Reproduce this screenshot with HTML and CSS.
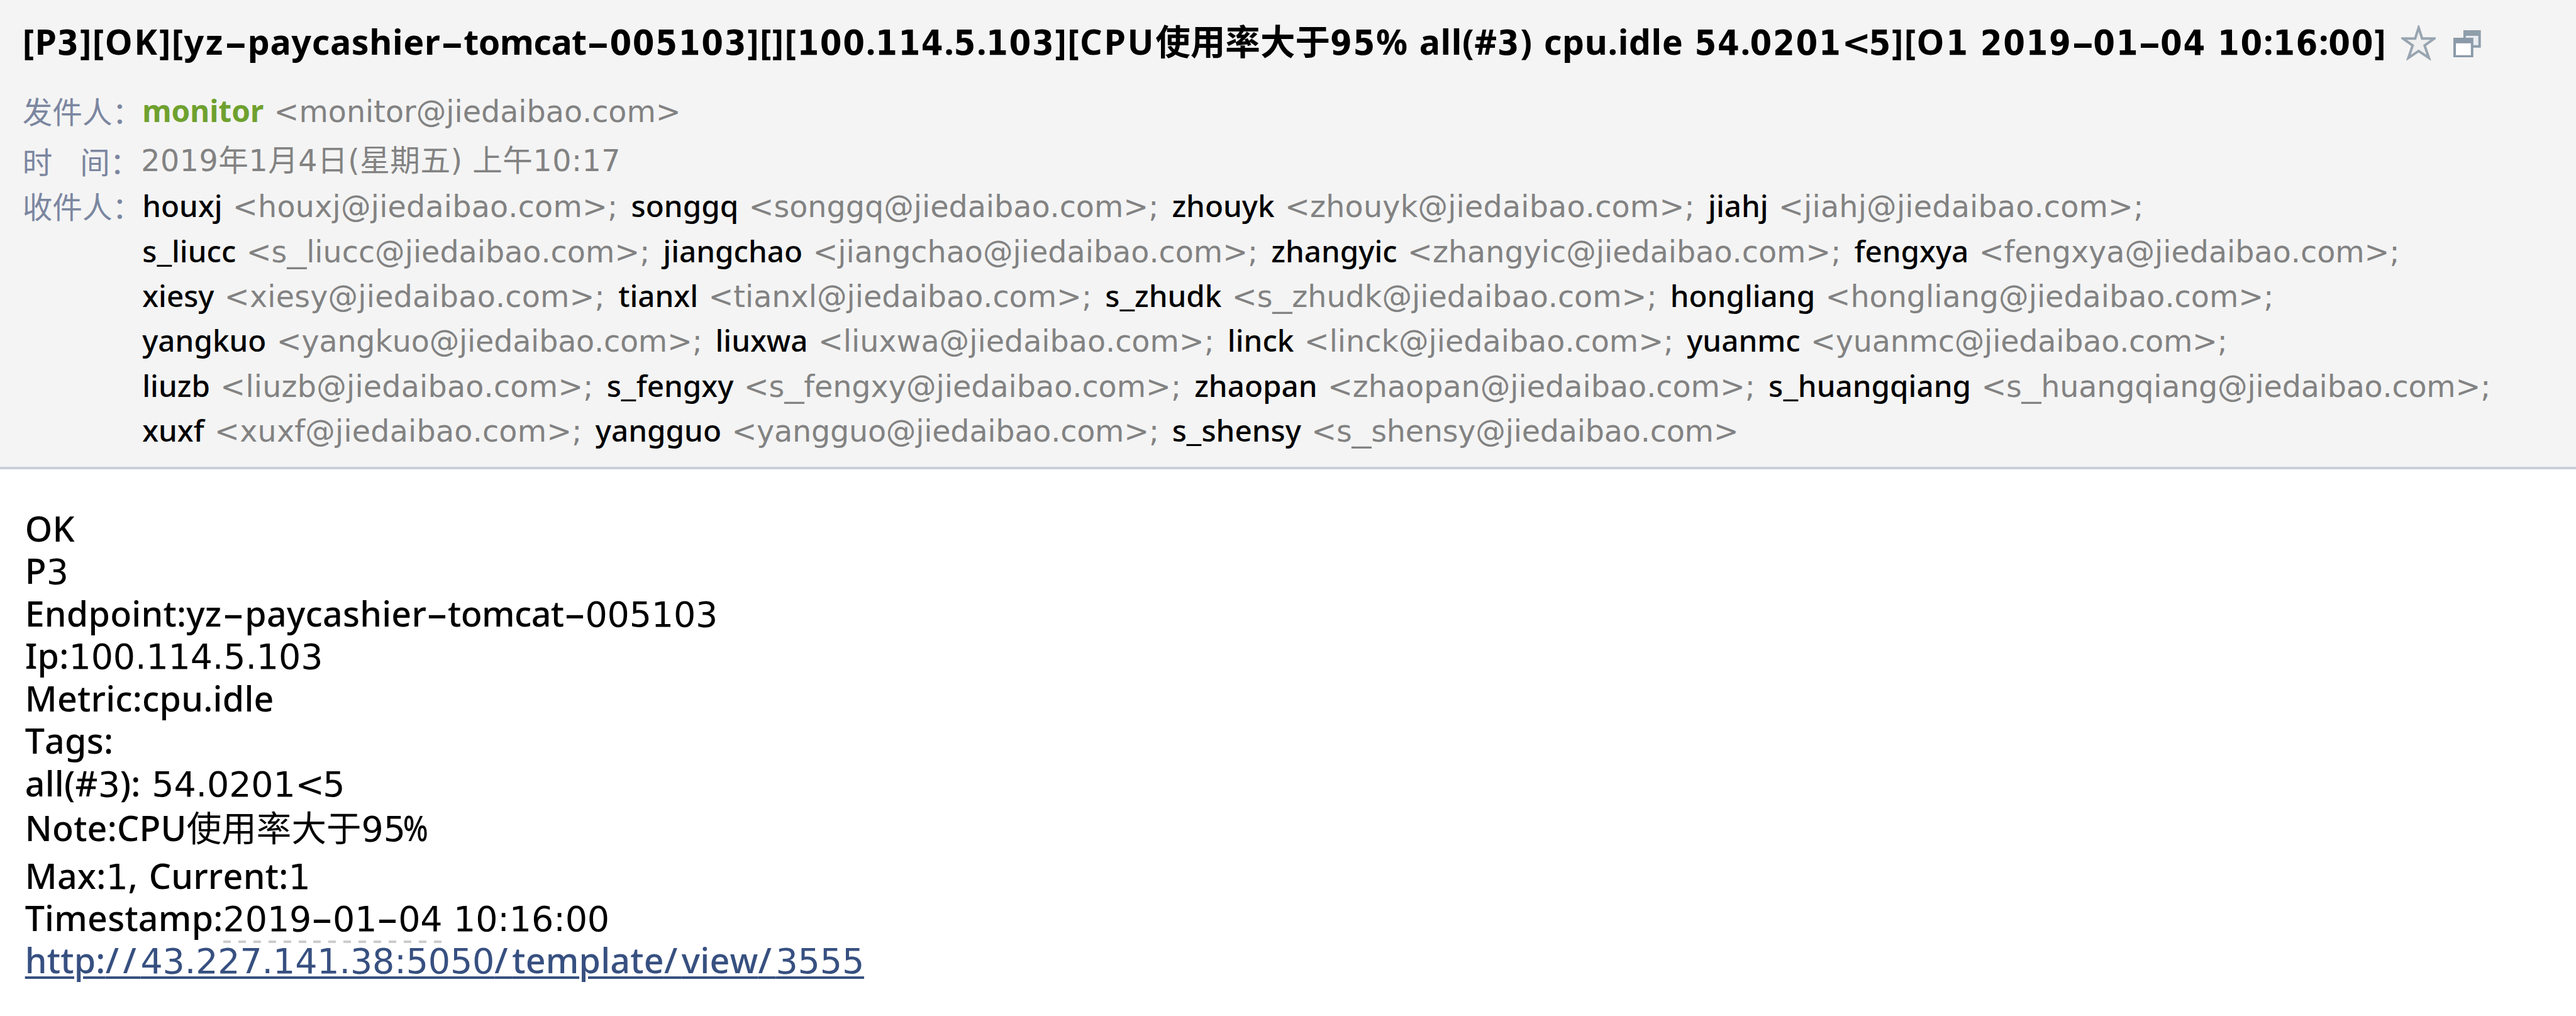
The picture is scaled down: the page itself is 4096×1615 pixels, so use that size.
FILE: index.html
```html
<!DOCTYPE html>
<html lang="zh-CN">
<head>
<meta charset="utf-8">
<title>monitor</title>
<link rel="stylesheet" href="styles.css">
</head>
<body>
<header class="mail-head">
  <div class="subject">
    <h1><i class="b">[</i>P<i class="n">3</i><i class="b">][</i><i class="wide">OK</i><i class="b">][</i><i class="wide">yz</i><i class="h lg">-</i>paycashier<i class="h lg">-</i><i class="tight">tomcat</i><i class="h lg">-</i><i class="n">005103</i><i class="b">][][</i><i class="n">100<i class="dot">.</i>114<i class="dot">.</i>5<i class="dot">.</i>103</i><i class="b">][</i><i class="wide">CPU</i><i class="cn">使用率大于</i><i class="n">95</i>% all(#<i class="n">3</i>) cpu.idle <i class="n">54<i class="dot">.</i>0201</i><i class="lt">&lt;</i><i class="n">5</i><i class="b">][</i><i class="wide">O</i><i class="n">1</i> <i class="n">2019</i><i class="h">-</i><i class="n">01</i><i class="h">-</i><i class="n">04</i> <i class="n">10<i class="dot">:</i>16<i class="dot">:</i>00</i><i class="b">]</i></h1>
    <svg class="star" viewBox="0 0 56 56"><path d="M28 4 L33.6 21.500H53L37.500 32.500L44.500 52.500L28 41.500L11.500 52.500L18.500 32.500L3 21.500H22.400Z"/></svg>
    <svg class="win" viewBox="0 0 44 44"><path fill="#8f9eab" d="M16 0h28v28H16z"/><path fill="#e9edf2" d="M20 9h20v15H20z"/><path fill="#8b9aa8" d="M0 12h32v32H0z"/><path fill="#fff" d="M4 21h24v19H4z"/></svg>
  </div>
  <dl class="meta">
    <dt>发件人：</dt>
    <dd class="from"><b>monitor</b> <span>&lt;monitor@jiedaibao.com&gt;</span></dd>
    <dt>时&nbsp;&nbsp;&nbsp;间：</dt>
    <dd class="time">2019年1月4日(星期五) 上午10:17</dd>
    <dt>收件人：</dt>
    <dd class="to">
      <p><b class="x">houxj</b> <span>&lt;houxj@jiedaibao.com&gt;; </span><b>songgq</b> <span>&lt;songgq@jiedaibao.com&gt;; </span><b class="x">zhouyk</b> <span>&lt;zhouyk@jiedaibao.com&gt;; </span><b class="x">jiahj</b> <span>&lt;jiahj@jiedaibao.com&gt;;</span></p>
      <p><b>s<u>_</u>liucc</b> <span>&lt;s<u>_</u>liucc@jiedaibao.com&gt;; </span><b>jiangchao</b> <span>&lt;jiangchao@jiedaibao.com&gt;; </span><b>zhangyic</b> <span>&lt;zhangyic@jiedaibao.com&gt;; </span><b>fengxya</b> <span>&lt;fengxya@jiedaibao.com&gt;;</span></p>
      <p><b class="x">xiesy</b> <span>&lt;xiesy@jiedaibao.com&gt;; </span><b>tianxl</b> <span>&lt;tianxl@jiedaibao.com&gt;; </span><b>s<u>_</u>zhudk</b> <span>&lt;s<u>_</u>zhudk@jiedaibao.com&gt;; </span><b>hongliang</b> <span>&lt;hongliang@jiedaibao.com&gt;;</span></p>
      <p><b class="t">yangkuo</b> <span>&lt;yangkuo@jiedaibao.com&gt;; </span><b>liuxwa</b> <span>&lt;liuxwa@jiedaibao.com&gt;; </span><b>linck</b> <span>&lt;linck@jiedaibao.com&gt;; </span><b class="t">yuanmc</b> <span>&lt;yuanmc@jiedaibao.com&gt;;</span></p>
      <p><b class="x">liuzb</b> <span>&lt;liuzb@jiedaibao.com&gt;; </span><b>s<u>_</u>fengxy</b> <span>&lt;s<u>_</u>fengxy@jiedaibao.com&gt;; </span><b>zhaopan</b> <span>&lt;zhaopan@jiedaibao.com&gt;; </span><b class="t">s<u>_</u>huangqiang</b> <span>&lt;s<u>_</u>huangqiang@jiedaibao.com&gt;;</span></p>
      <p><b class="x">xuxf</b> <span>&lt;xuxf@jiedaibao.com&gt;; </span><b class="t">yangguo</b> <span>&lt;yangguo@jiedaibao.com&gt;; </span><b class="t">s<u>_</u>shensy</b> <span>&lt;s<u>_</u>shensy@jiedaibao.com&gt;</span></p>
    </dd>
  </dl>
</header>
<main class="mail-body">
  <p>OK</p>
  <p>P<i class="n">3</i></p>
  <p>Endpoint:yz<i class="h lg">-</i>paycashier<i class="h">-</i><i class="tight">tomcat</i><i class="h">-</i><i class="n">005103</i></p>
  <p>Ip:<i class="n">100.114.5.103</i></p>
  <p>Metric:cpu.idle</p>
  <p>Tags:</p>
  <p>all(#<i class="n">3</i>): <i class="n">54.0201</i><i class="lt">&lt;</i><i class="n">5</i></p>
  <p class="note">Note:CPU<i class="cn">使用率大于</i><i class="n">95</i><i class="pc">%</i></p>
  <p>Max:<i class="n">1</i>, Current:<i class="n">1</i></p>
  <p>Timestamp:<span class="date"><i class="n">2019</i><i class="h">-</i><i class="n">01</i><i class="h">-</i><i class="n">04</i></span> <i class="n">10:16:00</i></p>
  <p><a href="#">http:<i class="sl">//</i><i class="n">43.227.141.38:5050</i><i class="sl">/</i>template<i class="sl">/</i>view<i class="sl">/</i><i class="n">3555</i></a></p>
</main>
</body>
</html>
```
FILE: styles.css
```css
* { box-sizing: border-box; }

body {
  margin: 0;
  width: 4096px;
  height: 1615px;
  overflow: hidden;
  background: #fff;
  color: #000;
  font-family: "Noto Sans", "Noto Sans CJK SC", sans-serif;
  font-weight: 500;
  font-kerning: none;
  white-space: nowrap;
}

i { font-style: normal; }
u { text-decoration: none; }
h1, p, dl, dd { margin: 0; }

.mail-head {
  height: 746.2px;
  padding: 25.7px 0 0 35.7px;
  background: #f4f4f4;
  border-bottom: 4px solid #c9cfd9;
}

.subject {
  display: flex;
  align-items: flex-start;
  height: 80px;
}

h1 {
  font-size: 55.56px;
  line-height: 80px;
  font-weight: 700;
  letter-spacing: 0.6px;
  word-spacing: 3px;
  width: 3782px;
}

.n, .lt {
  font-family: "DejaVu Sans", sans-serif;
  font-weight: 400;
  line-height: 0;
  letter-spacing: -0.2px;
}

.lt { letter-spacing: -3px; }

h1 .n {
  font-family: "DejaVu Sans Condensed", "DejaVu Sans", sans-serif;
  font-weight: 700;
  letter-spacing: 1.7px;
}

h1 .dot {
  font-family: "Noto Sans", sans-serif;
  letter-spacing: -0.5px;
}

h1 .lt { font-weight: 700; letter-spacing: -3.6px; }

.b { letter-spacing: 1.4px; }
.wide { letter-spacing: 2.7px; }
.tight { letter-spacing: -0.6px; }

.h {
  display: inline-block;
  line-height: 1;
  letter-spacing: 0;
  margin: 0 8px;
  transform: scaleX(1.9);
}

.h.lg { margin: 0 9.5px; }

.cn { line-height: 0; letter-spacing: 0; font-weight: 400; }
h1 .cn { font-weight: 700; }

.pc {
  display: inline-block;
  line-height: 1;
  margin-left: -4px;
  transform: scaleX(0.84);
  transform-origin: left;
}

.star {
  width: 55.6px;
  height: 55.6px;
  margin-top: 14.3px;
  fill: #efefef;
  stroke: #98a5b0;
  stroke-width: 4;
}

.win {
  width: 43.7px;
  height: 43.7px;
  margin: 21.9px 0 0 27.8px;
}

.meta {
  display: grid;
  grid-template-columns: 190.5px 1fr;
  margin-top: 34.6px;
  font-size: 47.6px;
  line-height: 71.44px;
}

dt {
  color: #7b86a0;
  font-family: "Noto Sans CJK SC", sans-serif;
  font-weight: 400;
  word-spacing: 4px;
}

.from { height: 79.4px; color: #828282; word-spacing: 4px; }
.from b { color: #6fa12f; font-weight: 700; }
.time, .meta span {
  color: #828282;
  font-family: "DejaVu Sans", "Noto Sans CJK SC", sans-serif;
  font-weight: 400;
}
.time { margin-left: -2px; letter-spacing: 0.5px; }
.meta span { line-height: 0; }
.to { word-spacing: 4px; }
.to b { font-weight: 500; }
.to span { word-spacing: 6px; }
.to .x + span { letter-spacing: 0.2px; }
.to .t + span { letter-spacing: -0.2px; }
.to u { display: inline-block; line-height: 1; }
.to b u { transform: scaleX(1.15); margin: 0 1.5px; }
.to span u { transform: scaleX(1.3); margin: 0 3.5px; }

.mail-body {
  padding: 59.7px 0 0 39.7px;
  font-size: 55.56px;
  line-height: 67.47px;
  letter-spacing: 0.2px;
  word-spacing: 3px;
}

.mail-body p { height: 67.47px; }
.mail-body .note { height: 79.4px; padding-top: 3.6px; }

.date {
  padding-bottom: 2.8px;
  background: repeating-linear-gradient(90deg, #ccc 0 12px, transparent 12px 23.9px) left bottom / 100% 4px no-repeat;
}

a {
  color: #375080;
  text-decoration: underline;
  text-decoration-thickness: 4px;
  text-underline-offset: 5px;
}

.sl { letter-spacing: 6.5px; }
```
